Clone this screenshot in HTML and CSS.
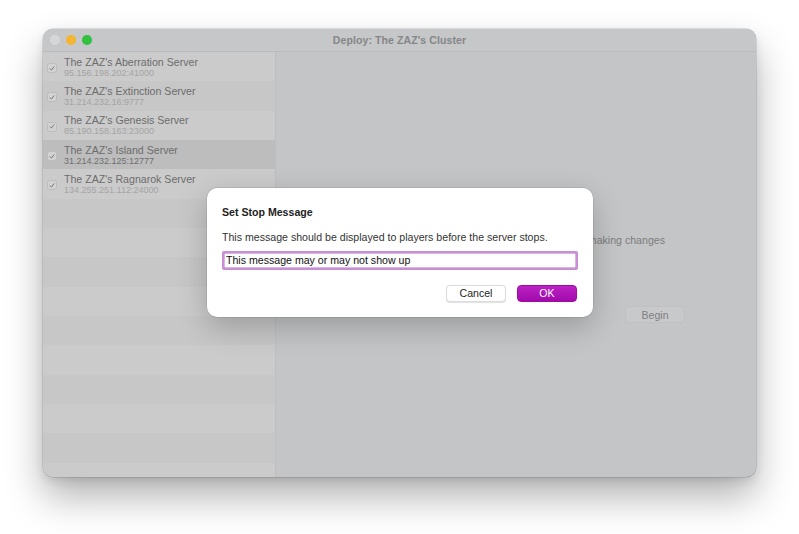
FILE: index.html
```html
<!DOCTYPE html>
<html>
<head>
<meta charset="utf-8">
<link rel="stylesheet" href="styles.css">
</head>
<body>
<div class="window">
  <div class="titlebar">
    <div class="lights">
      <span class="light gray"></span>
      <span class="light yellow"></span>
      <span class="light green"></span>
    </div>
    <div class="title">Deploy: The ZAZ's Cluster</div>
  </div>
  <div class="content">
    <div class="sidebar">
      <div class="row light-row"><span class="check"><svg viewBox="0 0 10 10"><path d="M2.6 5.2 L4.3 7 L7.4 2.8"/></svg></span><div class="txt"><div class="name">The ZAZ's Aberration Server</div><div class="addr">95.156.198.202:41000</div></div></div>
      <div class="row dark-row"><span class="check"><svg viewBox="0 0 10 10"><path d="M2.6 5.2 L4.3 7 L7.4 2.8"/></svg></span><div class="txt"><div class="name">The ZAZ's Extinction Server</div><div class="addr">31.214.232.16:9777</div></div></div>
      <div class="row light-row"><span class="check"><svg viewBox="0 0 10 10"><path d="M2.6 5.2 L4.3 7 L7.4 2.8"/></svg></span><div class="txt"><div class="name">The ZAZ's Genesis Server</div><div class="addr">85.190.158.163:23000</div></div></div>
      <div class="row selected"><span class="check"><svg viewBox="0 0 10 10"><path d="M2.6 5.2 L4.3 7 L7.4 2.8"/></svg></span><div class="txt"><div class="name">The ZAZ's Island Server</div><div class="addr">31.214.232.125:12777</div></div></div>
      <div class="row light-row"><span class="check"><svg viewBox="0 0 10 10"><path d="M2.6 5.2 L4.3 7 L7.4 2.8"/></svg></span><div class="txt"><div class="name">The ZAZ's Ragnarok Server</div><div class="addr">134.255.251.112:24000</div></div></div>
      <div class="row dark-row"></div>
      <div class="row light-row"></div>
      <div class="row dark-row"></div>
      <div class="row light-row"></div>
      <div class="row dark-row"></div>
      <div class="row light-row"></div>
      <div class="row dark-row"></div>
      <div class="row light-row"></div>
      <div class="row dark-row"></div>
      <div class="row light-row"></div>
      <div class="row dark-row"></div>
    </div>
    <div class="main">
      <p class="hint">before making changes</p>
      <button class="begin">Begin</button>
    </div>
  </div>
</div>

<div class="dialog">
  <div class="dtitle">Set Stop Message</div>
  <div class="dbody">This message should be displayed to players before the server stops.</div>
  <div class="field">This message may or may not show up</div>
  <div class="buttons">
    <button class="btn cancel">Cancel</button>
    <button class="btn ok">OK</button>
  </div>
</div>
</body>
</html>
```

FILE: styles.css
```css
* { box-sizing: border-box; }
html, body { margin: 0; padding: 0; }
body {
  width: 799px;
  height: 534px;
  background: #ffffff;
  font-family: "Liberation Sans", Arial, sans-serif;
  overflow: hidden;
  position: relative;
  padding: 29px 0 0 43px;
}
.window {
  width: 713px;
  height: 448px;
  border-radius: 10px;
  overflow: hidden;
  background: #c4c5c7;
  box-shadow: 0 0 0 0.5px rgba(0,0,0,0.2), 0 20px 38px rgba(0,0,0,0.3), 0 4px 10px rgba(0,0,0,0.1);
  display: flex;
  flex-direction: column;
}
.titlebar {
  height: 23px;
  flex: none;
  background: #c5c7c8;
  border-bottom: 1px solid #b8babb;
  position: relative;
  display: flex;
  align-items: center;
  justify-content: center;
}
.lights {
  position: absolute;
  left: 7px;
  top: 6px;
  display: flex;
  gap: 6.5px;
}
.light {
  width: 9.5px;
  height: 9.5px;
  border-radius: 50%;
  display: block;
}
.light.gray { background: #d5d6d7; }
.light.yellow { background: #f4b630; }
.light.green { background: #31c140; }
.title {
  font-size: 10.5px;
  font-weight: bold;
  color: #848687;
  letter-spacing: 0.1px;
}
.content {
  flex: 1;
  display: flex;
  min-height: 0;
}
.sidebar {
  width: 233px;
  flex: none;
  border-right: 1px solid #bdbebf;
  background: #c9c9c9;
  overflow: hidden;
}
.row {
  height: 29.33px;
  display: flex;
  align-items: center;
  padding-left: 4px;
}
.light-row { background: #cbcbcb; }
.dark-row { background: #c7c7c7; }
.row.selected { background: #bdbdbd; }
.check {
  width: 10px;
  height: 10px;
  border-radius: 2.5px;
  background: #d2d2d2;
  border: 0.5px solid #bcbcbc;
  margin-top: 3px;
  margin-right: 7px;
  display: flex;
  align-items: center;
  justify-content: center;
}
.check svg { width: 9px; height: 9px; }
.check path { fill: none; stroke: #767676; stroke-width: 1.2; stroke-linecap: round; stroke-linejoin: round; }
.txt { display: flex; flex-direction: column; }
.name {
  font-size: 10.6px;
  color: #6c6c6c;
  line-height: 12px;
}
.addr {
  font-size: 9px;
  color: #a4a4a4;
  line-height: 10px;
}
.selected .addr { color: #6e6e6e; }
.main {
  flex: 1;
  display: flex;
  flex-direction: column;
  align-items: flex-end;
  padding-top: 182px;
}
.hint {
  margin: 0 91px 0 0;
  font-size: 10.6px;
  color: #7c7c7c;
  line-height: 13px;
  white-space: nowrap;
}
.begin {
  margin: 59px 71px 0 0;
  width: 60px;
  height: 17px;
  border-radius: 4px;
  border: 1px solid #bfc0c2;
  background: #c8c9cb;
  color: #7f7f7f;
  font-family: "Liberation Sans", Arial, sans-serif;
  font-size: 10.6px;
  padding: 0;
}
.dialog {
  position: absolute;
  left: 207px;
  top: 188px;
  width: 386px;
  height: 129px;
  background: #ffffff;
  border-radius: 10px;
  box-shadow: 0 0 0 0.5px rgba(0,0,0,0.15), 0 10px 30px rgba(0,0,0,0.22);
  padding: 18px 15px 0 15px;
  display: flex;
  flex-direction: column;
}
.dtitle {
  font-size: 10.6px;
  font-weight: bold;
  color: #222222;
  line-height: 13px;
}
.dbody {
  margin-top: 12px;
  font-size: 10.6px;
  color: #333333;
  line-height: 13px;
}
.field {
  margin-top: 7px;
  height: 19px;
  border: 2px solid #c98fd6;
  border-radius: 2px;
  font-size: 10.6px;
  color: #111111;
  line-height: 15px;
  padding-left: 2px;
  box-shadow: inset 0 0 0 0.5px #b173c1;
}
.buttons {
  margin-top: 15px;
  margin-right: 1px;
  display: flex;
  justify-content: flex-end;
  gap: 11px;
}
.btn {
  width: 60px;
  height: 17px;
  border-radius: 4px;
  font-family: "Liberation Sans", Arial, sans-serif;
  font-size: 10.6px;
  padding: 0;
  line-height: 15px;
}
.cancel {
  background: #ffffff;
  border: 1px solid #dcdcdc;
  box-shadow: 0 0.5px 1px rgba(0,0,0,0.12);
  color: #262626;
}
.ok {
  background: linear-gradient(#bb22c4, #a10aab);
  border: 1px solid #a00aa9;
  color: #ffffff;
}
```
